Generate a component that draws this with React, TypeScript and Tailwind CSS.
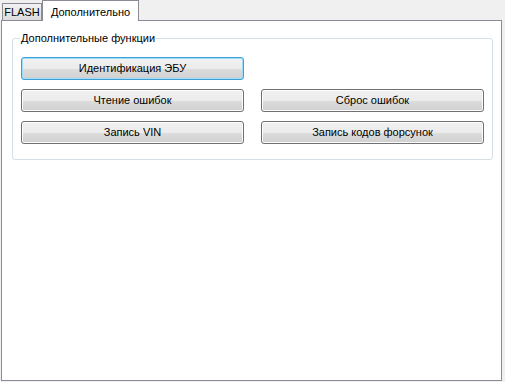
const font = { fontFamily: '"Liberation Sans", Arial, sans-serif' };

function Btn({ label, focused }: { label: string; focused?: boolean }) {
  return (
    <button
      type="button"
      className={
        "h-[23px] w-[223px] rounded-[3px] border text-[11px] leading-none text-black bg-[linear-gradient(#f2f2f2_0%,#ebebeb_50%,#dddddd_51%,#cfcfcf_100%)] " +
        (focused
          ? "border-[#3c9fd6] shadow-[inset_0_0_0_1px_#9fdcf8]"
          : "border-[#707070] shadow-[inset_0_0_0_1px_#fcfcfc]")
      }
    >
      {label}
    </button>
  );
}

export default function App() {
  return (
    <div className="w-[505px] h-[382px] bg-[#f0f0f0] text-[11px] text-black" style={font}>
      <div className="flex h-[20px] items-end pl-[2px]">
        <div className="h-[17px] w-[40px] border border-b-0 border-[#898c95] bg-[linear-gradient(#f2f2f2,#dcdcdc)] flex items-center justify-center">
          FLASH
        </div>
        <div className="relative z-10 h-[21px] -mb-px w-[97px] border border-b-0 border-[#898c95] bg-white flex items-start justify-center pt-[3px]">
          Дополнительно
        </div>
      </div>
      <div className="ml-[1px] h-[361px] w-[501px] border border-[#898c95] bg-white pt-[12px] px-[10px]">
        <fieldset className="w-[481px] h-[127px] rounded-[3px] border border-[#d5dfe5] px-[8px] pt-[10px]">
          <legend className="-ml-[1px] px-[1px] leading-none">Дополнительные функции</legend>
          <div className="flex flex-col gap-[9px] pt-[3px]">
            <div className="flex">
              <Btn label="Идентификация ЭБУ" focused />
            </div>
            <div className="flex gap-[17px]">
              <Btn label="Чтение ошибок" />
              <Btn label="Сброс ошибок" />
            </div>
            <div className="flex gap-[17px]">
              <Btn label="Запись VIN" />
              <Btn label="Запись кодов форсунок" />
            </div>
          </div>
        </fieldset>
      </div>
    </div>
  );
}
